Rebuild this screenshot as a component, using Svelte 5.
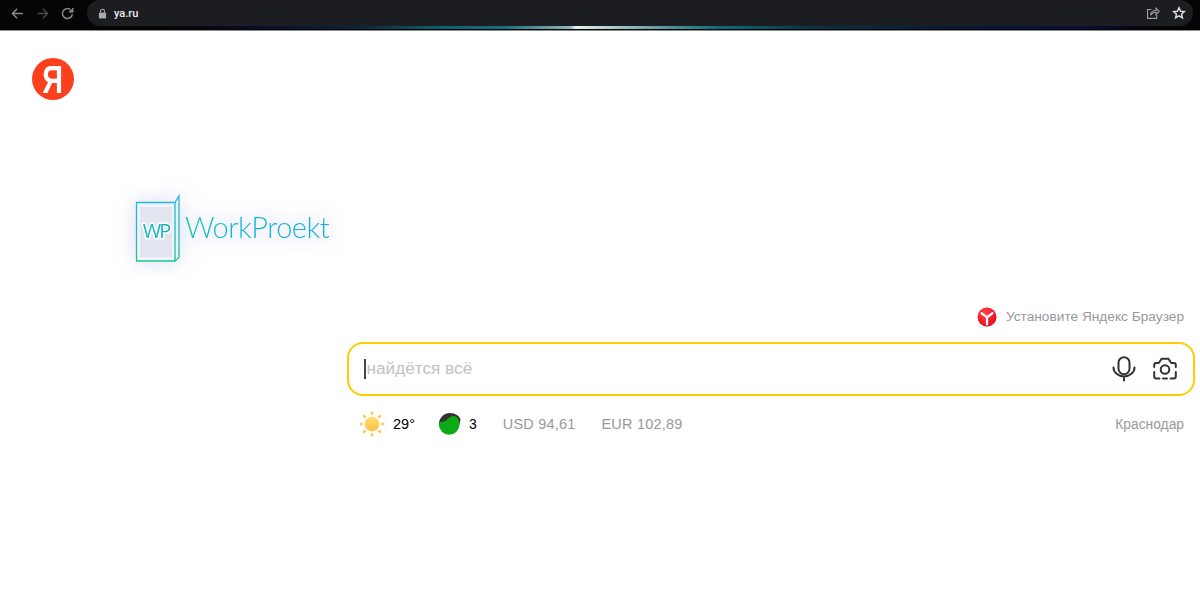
<script>
  const rates = [
    { id: 'usd', text: 'USD 94,61' },
    { id: 'eur', text: 'EUR 102,89' }
  ];
  const rays = [0, 45, 90, 135, 180, 225, 270, 315];
</script>

<div class="page">
  <header class="chrome">
    <div class="toolbar">
      <nav class="nav">
        <svg class="nav-icon" viewBox="0 0 16 16"><path d="M13.500 8H2.800M7.600 3 2.600 8l5 5" class="back" /></svg>
        <svg class="nav-icon" viewBox="0 0 16 16"><path d="M2.500 8h10.700M8.400 3l5 5-5 5" class="forward" /></svg>
        <svg class="nav-icon" viewBox="0 0 16 16"><path d="M13.200 8.600A5.300 5.300 0 1 1 11.600 4.200L13.400 6M13.600 2.200v4h-4" class="reload" /></svg>
      </nav>
      <div class="address">
        <svg class="lock" viewBox="0 0 10 12"><path d="M1 5h8v6.500H1z" /><path d="M2.800 5V3.400a2.200 2.200 0 0 1 4.400 0V5" class="shackle" /></svg>
        <span class="url">ya.ru</span>
        <div class="address-actions">
          <svg class="action" viewBox="0 0 16 16"><path d="M6 4H1.800v10.200h10.400V10M5.200 10.600c.3-3.600 3-5.400 6.300-5.400V2.600L15 6.200l-3.500 3.500V7.100c-2.600 0-4.800.9-6.300 3.500z" /></svg>
          <svg class="action star" viewBox="0 0 16 16"><path d="m8 2 1.800 4 4.300.4-3.200 2.900 1 4.200L8 11.300 4.100 13.500l1-4.200L1.900 6.400 6.200 6z" /></svg>
        </div>
      </div>
    </div>
    <div class="strip"></div>
  </header>

  <main class="content">
    <div class="ya-logo"><span>Я</span></div>

    <div class="brand">
      <svg class="book" viewBox="0 0 48 68">
        <defs>
          <linearGradient id="bookStroke" x1="0" y1="0" x2="0" y2="1">
            <stop offset="0" stop-color="#22b6e0" />
            <stop offset="1" stop-color="#1cc68a" />
          </linearGradient>
        </defs>
        <rect x="6" y="13" width="32" height="50" fill="#e2e4f0" />
        <path d="M2.500 8.500H41V67H2.500zM41 8.500 45 2v61.500L41 67" fill="none" stroke="url(#bookStroke)" stroke-width="1.300" />
        <text x="22" y="44" text-anchor="middle" class="book-text">WP</text>
      </svg>
      <span class="brand-name">WorkProekt</span>
    </div>

    <section class="search">
      <div class="promo">
        <svg class="browser-icon" viewBox="0 0 20 20">
          <defs>
            <radialGradient id="browserRed" cx=".4" cy=".35" r=".75">
              <stop offset="0" stop-color="#ff4a4a" />
              <stop offset="1" stop-color="#e4001a" />
            </radialGradient>
          </defs>
          <circle cx="10" cy="10" r="9.500" fill="url(#browserRed)" />
          <path d="M3.800 5.600 10 10.400l6.200-4.800M10 10.400v7.800" fill="none" stroke="#fff" stroke-width="2.200" />
        </svg>
        <span>Установите Яндекс Браузер</span>
      </div>

      <div class="field">
        <span class="caret"></span>
        <span class="placeholder">найдётся всё</span>
        <div class="field-actions">
          <svg class="tool" viewBox="0 0 24 26">
            <rect x="6.500" y="1.200" width="11" height="17" rx="5.500" />
            <path d="M1.500 11.500a10.500 9 0 0 0 21 0M12 20.500v4" />
          </svg>
          <svg class="tool camera" viewBox="0 0 24 24">
            <path d="M1.200 10V8q0-2 2-2h2.600L8.600 1.800h6.800L18.200 6h2.600q2 0 2 2v2M22.800 15v4.500q0 2-2 2h-3.300M6.500 21.500H3.200q-2 0-2-2V15M10 21.500h4" />
            <circle cx="12" cy="12.500" r="4.300" />
          </svg>
        </div>
      </div>

      <div class="info">
        <svg class="sun" viewBox="0 0 26 26">
          <defs>
            <linearGradient id="sunFill" x1="0" y1="0" x2="0" y2="1">
              <stop offset="0" stop-color="#ffdc73" />
              <stop offset="1" stop-color="#ffc23d" />
            </linearGradient>
          </defs>
          <circle cx="13" cy="13" r="7.300" fill="url(#sunFill)" />
          {#each rays as angle}
            <rect x="11.700" y="0.500" width="2.600" height="3.500" rx="1.300" fill="#ffc94f" transform="rotate({angle} 13 13)" />
          {/each}
        </svg>
        <span class="temp">29°</span>
        <svg class="traffic" viewBox="0 0 24 24">
          <path d="M2 12A11 11 0 0 1 13 1c5 0 10 3 10.500 7L22 14H2z" fill="#333" />
          <path d="M2 11c2-2 5-1 7-2.500C11.500 6.700 13 4 16.500 4c3.500 0 6 4 6 8.500a10.300 10.300 0 0 1-20.600 0z" fill="#0bab16" />
        </svg>
        <span class="score">3</span>
        <div class="rates">
          {#each rates as rate (rate.id)}
            <span>{rate.text}</span>
          {/each}
        </div>
        <span class="city">Краснодар</span>
      </div>
    </section>
  </main>
</div>

<style>
  :global(body) {
    margin: 0;
    background: #fff;
  }

  .page {
    width: 1200px;
    height: 593px;
    overflow: hidden;
    font-family: "Liberation Sans", Arial, sans-serif;
    background: #fff;
  }

  .chrome {
    background: #050506;
  }

  .toolbar {
    display: flex;
    align-items: center;
    height: 26px;
    padding-right: 7px;
  }

  .nav {
    display: flex;
    align-items: center;
    gap: 10px;
    width: 87px;
    padding-left: 10px;
    box-sizing: border-box;
  }

  .nav-icon {
    width: 15px;
    height: 15px;
    flex: none;
    fill: none;
    stroke-width: 1.500;
  }

  .back { stroke: #8a8b8d; }
  .forward { stroke: #47484a; }
  .reload { stroke: #8a8b8d; }

  .address {
    flex: 1;
    display: flex;
    align-items: center;
    height: 26px;
    border-radius: 13px;
    background: #1c1d20;
    padding: 0 7px 0 11px;
  }

  .lock {
    width: 9px;
    height: 11px;
    fill: #a9aaac;
    margin-right: 7px;
  }

  .shackle {
    fill: none;
    stroke: #a9aaac;
    stroke-width: 1.200;
  }

  .url {
    color: #eceded;
    font-family: Roboto, sans-serif;
    font-size: 11px;
    font-weight: 500;
  }

  .address-actions {
    margin-left: auto;
    display: flex;
    align-items: center;
    gap: 12px;
  }

  .action {
    width: 14px;
    height: 14px;
    fill: none;
    stroke: #9b9c9e;
    stroke-width: 1.300;
  }

  .star {
    stroke: #e0e1e3;
    stroke-width: 1.600;
  }

  .strip {
    height: 5px;
    background:
      linear-gradient(90deg, #050506 0 14%, #07102a 22%, #0a2636 30%, #0e5a68 36%, #1a6f7c 42%, #8fb5b8 47.500%, #e8f0f0 48%, #5f9aa0 55%, #0f6a75 60%, #0a3142 68%, #081838 80%, #06103a 90%, #050506 96%) top / 100% 3px no-repeat,
      #050506;
    border-bottom: 1px solid #8b8b8b;
    box-sizing: border-box;
  }

  .content {
    padding-top: 27px;
  }

  .ya-logo {
    width: 42px;
    height: 42px;
    margin-left: 32px;
    border-radius: 50%;
    background: #fc3f1d;
    display: flex;
    align-items: center;
    justify-content: center;
    color: #fff;
    font-size: 38px;
    font-weight: 700;
    line-height: 1;
  }

  .ya-logo span {
    display: inline-block;
    margin-top: 2px;
    transform: scaleX(.76);
  }

  .brand {
    display: flex;
    align-items: center;
    gap: 3px;
    width: max-content;
    margin: 94px 0 0 134px;
    filter: drop-shadow(0 0 3px #fff) drop-shadow(0 0 9px rgba(170, 178, 230, .6));
  }

  .book {
    width: 48px;
    height: 68px;
    flex: none;
  }

  .book-text {
    font-family: "Open Sans", sans-serif;
    font-weight: 400;
    font-size: 20px;
    letter-spacing: -2px;
    fill: #19b4bf;
    stroke: #fff;
    stroke-width: 3px;
    paint-order: stroke;
  }

  .brand-name {
    font-family: Lato, sans-serif;
    font-weight: 300;
    font-size: 29px;
    letter-spacing: -.5px;
    line-height: 40px;
    background: linear-gradient(100deg, #18c39a 0%, #12b7d8 30%, #10aedc 100%);
    -webkit-background-clip: text;
    background-clip: text;
    color: transparent;
    margin-top: -2px;
  }

  .search {
    width: 848px;
    margin: 43px 0 0 347px;
  }

  .promo {
    display: flex;
    align-items: center;
    justify-content: flex-end;
    gap: 9px;
    height: 22px;
    padding-right: 11px;
    color: #999;
    font-size: 13.700px;
  }

  .browser-icon {
    width: 20px;
    height: 20px;
    margin-top: 2px;
  }

  .field {
    display: flex;
    align-items: center;
    height: 54px;
    margin-top: 15px;
    box-sizing: border-box;
    border: 2px solid #fc0;
    border-radius: 16px;
    padding: 0 16px 0 15px;
  }

  .caret {
    width: 1.500px;
    height: 20px;
    background: #444;
    flex: none;
  }

  .placeholder {
    color: #c2c2c2;
    font-size: 17.200px;
    margin-left: 1px;
    margin-top: -2px;
  }

  .field-actions {
    margin-left: auto;
    display: flex;
    align-items: center;
    gap: 17px;
  }

  .tool {
    width: 24px;
    height: 26px;
    fill: none;
    stroke: #333;
    stroke-width: 2;
    stroke-linecap: round;
    stroke-linejoin: round;
  }

  .camera {
    height: 24px;
  }

  .info {
    display: flex;
    align-items: center;
    height: 28px;
    margin-top: 14px;
    padding: 0 11px 0 12px;
    font-size: 14.500px;
    color: #999;
  }

  .sun {
    width: 26px;
    height: 26px;
    flex: none;
  }

  .temp {
    color: #000;
    margin-left: 8px;
    font-size: 14.500px;
  }

  .traffic {
    width: 24px;
    height: 24px;
    flex: none;
    margin-left: 22px;
  }

  .score {
    color: #000;
    margin-left: 8px;
    font-size: 14px;
  }

  .rates {
    display: flex;
    gap: 26px;
    margin-left: 26px;
    letter-spacing: .2px;
  }

  .city {
    margin-left: auto;
    font-size: 13.800px;
  }
</style>
